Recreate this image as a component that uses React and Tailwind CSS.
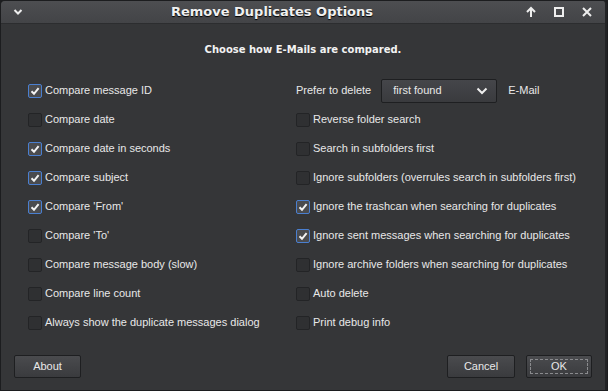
import React, { useState } from 'react'

const left = [
  ['Compare message ID', true],
  ['Compare date', false],
  ['Compare date in seconds', true],
  ['Compare subject', true],
  ["Compare 'From'", true],
  ["Compare 'To'", false],
  ['Compare message body (slow)', false],
  ['Compare line count', false],
  ['Always show the duplicate messages dialog', false],
]

const right = [
  ['Reverse folder search', false],
  ['Search in subfolders first', false],
  ['Ignore subfolders (overrules search in subfolders first)', false],
  ['Ignore the trashcan when searching for duplicates', true],
  ['Ignore sent messages when searching for duplicates', true],
  ['Ignore archive folders when searching for duplicates', false],
  ['Auto delete', false],
  ['Print debug info', false],
]

const Check = ({ label, checked, onToggle }) => (
  <label className="flex items-center h-[29px] cursor-default" onClick={onToggle}>
    <span
      className={
        'w-[14px] h-[14px] rounded-[2px] border flex items-center justify-center mr-[3px] ' +
        (checked ? 'border-[#4a7fd0] bg-[#4a4b4e]' : 'border-[#232426] bg-[#2f3032]')
      }
    >
      {checked && (
        <svg width="10" height="10" viewBox="0 0 10 10">
          <path d="M1.5 5.2 L4 7.8 L8.6 2.2" stroke="#f2f2f2" strokeWidth="2" fill="none" />
        </svg>
      )}
    </span>
    <span className="text-[#e8e8e8]">{label}</span>
  </label>
)

const Button = ({ children, focused, className = '' }) => (
  <button
    className={
      'h-[23px] rounded-[2px] border border-[#1e1f21] bg-gradient-to-b from-[#4a4b4e] to-[#3a3b3e] text-[#e8e8e8] flex items-center justify-center p-[3px] ' +
      className
    }
  >
    <span
      className={
        'w-full h-full flex items-center justify-center ' +
        (focused ? 'border border-dashed border-[#8a8b8e]' : '')
      }
    >
      {children}
    </span>
  </button>
)

export default function App() {
  const [leftState, setLeftState] = useState(left.map((l) => l[1]))
  const [rightState, setRightState] = useState(right.map((r) => r[1]))

  return (
    <div className="w-[608px] h-[391px] bg-[#1c1d1f] p-[1px] font-['Liberation_Sans',Arial,sans-serif] text-[11px]">
      <div className="w-full h-full flex flex-col rounded-t-[4px] overflow-hidden bg-[#353638] border-r-[2px] border-[#222325]">
        {/* Title bar */}
        <div className="h-[23px] flex items-center bg-gradient-to-b from-[#4d4e51] to-[#434447] border-b border-[#2c2d2f] px-[10px] text-[#f0f0f0]">
          <svg width="10" height="8" viewBox="0 0 10 8" className="ml-[2px]">
            <path d="M1.5 2 L5 5.5 L8.5 2" stroke="#eeeeee" strokeWidth="2" fill="none" />
          </svg>
          <div className="flex-1 text-center font-['DejaVu_Sans',sans-serif] font-bold text-[13px] pr-[4px] [text-shadow:0_1px_1px_#000]">
            Remove Duplicates Options
          </div>
          <div className="flex items-center gap-[16px] mr-[2px]">
            <svg width="12" height="12" viewBox="0 0 12 12">
              <path d="M6 11 V2 M2 6 L6 2 L10 6" stroke="#eeeeee" strokeWidth="2" fill="none" />
            </svg>
            <svg width="12" height="12" viewBox="0 0 12 12">
              <rect x="2" y="2" width="8" height="8" stroke="#eeeeee" strokeWidth="2" fill="none" />
            </svg>
            <svg width="12" height="12" viewBox="0 0 12 12">
              <path d="M2 2 L10 10 M10 2 L2 10" stroke="#eeeeee" strokeWidth="2" fill="none" />
            </svg>
          </div>
        </div>

        {/* Body */}
        <div className="flex-1 flex flex-col px-[13px] pb-[12px]">
          <div className="text-center font-['DejaVu_Sans',sans-serif] font-bold text-[10px] text-[#f2f2f2] mt-[18px] mb-[19px]">
            Choose how E-Mails are compared.
          </div>

          <div className="flex">
            <div className="w-[282px] pl-[14px]">
              {left.map(([label], i) => (
                <Check
                  key={label}
                  label={label}
                  checked={leftState[i]}
                  onToggle={() => setLeftState((s) => s.map((v, j) => (j === i ? !v : v)))}
                />
              ))}
            </div>
            <div className="flex-1">
              <div className="flex items-center h-[29px] text-[#e8e8e8]">
                <span>Prefer to delete</span>
                <div className="ml-[10px] w-[116px] h-[24px] rounded-[2px] border border-[#1e1f21] bg-gradient-to-b from-[#45464a] to-[#3a3b3e] flex items-center pl-[11px] pr-[8px]">
                  <span className="flex-1">first found</span>
                  <svg width="12" height="8" viewBox="0 0 12 8">
                    <path d="M1.5 1.5 L6 6 L10.5 1.5" stroke="#eeeeee" strokeWidth="2" fill="none" />
                  </svg>
                </div>
                <span className="ml-[11px]">E-Mail</span>
              </div>
              {right.map(([label], i) => (
                <Check
                  key={label}
                  label={label}
                  checked={rightState[i]}
                  onToggle={() => setRightState((s) => s.map((v, j) => (j === i ? !v : v)))}
                />
              ))}
            </div>
          </div>

          <div className="mt-auto flex items-center">
            <Button className="w-[67px]">About</Button>
            <div className="flex-1" />
            <Button className="w-[68px]">Cancel</Button>
            <Button className="w-[66px] ml-[11px]" focused>
              OK
            </Button>
          </div>
        </div>
      </div>
    </div>
  )
}
